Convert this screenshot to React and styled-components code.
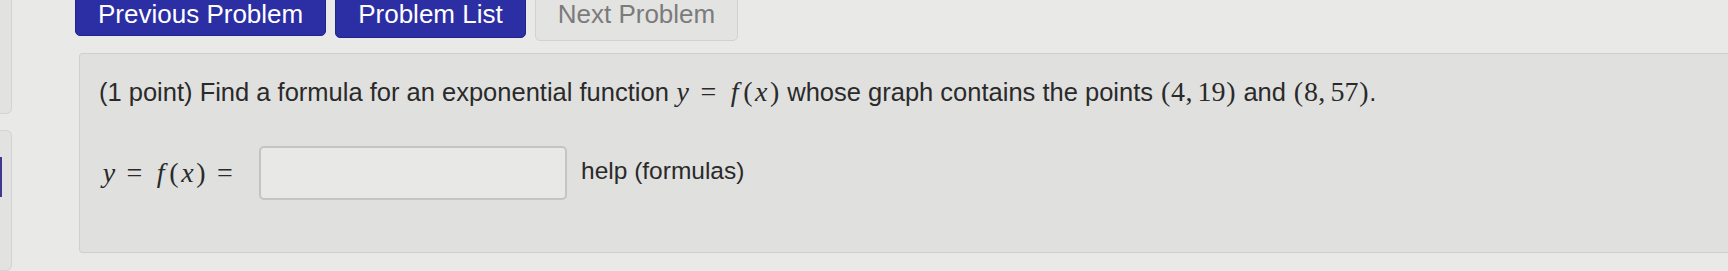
import React from "react";
import styled, { createGlobalStyle } from "styled-components";

const Global = createGlobalStyle`
  html, body { margin: 0; padding: 0; }
  body {
    background: #e9e9e8;
    font-family: "Liberation Sans", Arial, sans-serif;
    color: #2a2a2a;
    overflow: hidden;
  }
`;

const Page = styled.div`
  display: flex;
  height: 271px;
  overflow: hidden;
`;

const Sidebar = styled.div`
  width: 12px;
  display: flex;
  flex-direction: column;
  gap: 16px;
  margin-top: -6px;
`;

const SideBox = styled.div`
  height: ${(p) => p.h}px;
  background: #e2e2e1;
  border: 1px solid #d3d3d2;
  border-left: none;
  border-radius: 0 6px 6px 0;
  position: relative;
`;

const SideMark = styled.div`
  position: absolute;
  left: 0;
  top: 26px;
  width: 2px;
  height: 40px;
  background: #3b3a8f;
`;

const Main = styled.div`
  flex: 1;
  padding-left: 63px;
  display: flex;
  flex-direction: column;
`;

const Toolbar = styled.div`
  display: flex;
  gap: 9px;
  margin-top: -10px;
`;

const NavButton = styled.div`
  height: ${(p) => p.h}px;
  box-sizing: border-box;
  padding: 8px 22px 0;
  display: flex;
  align-items: flex-start;
  justify-content: center;
  border-radius: 5px;
  font-size: 26px;
  background: ${(p) => (p.disabled ? "#e3e3e2" : "#2c2ea4")};
  color: ${(p) => (p.disabled ? "#7b7b7b" : "#ffffff")};
  border: 1px solid ${(p) => (p.disabled ? "#d2d2d1" : "#23248a")};
`;

const Panel = styled.div`
  margin-top: 12px;
  margin-left: 4px;
  height: 200px;
  box-sizing: border-box;
  background: #e0e0df;
  border: 1px solid #cfcfce;
  border-right: none;
  border-radius: 4px 0 0 4px;
  padding: 21px 0 0 19px;
`;

const Line = styled.div`
  font-size: 25.5px;
  line-height: 34px;
  white-space: nowrap;
`;

const Math = styled.span`
  font-family: "Liberation Serif", "Times New Roman", serif;
  font-size: 28px;
  color: #2a2a2a;
  white-space: nowrap;
`;

const G = styled.span`
  display: inline-block;
  width: ${(p) => p.w}em;
  margin: 0 ${(p) => p.s || 0}em;
  text-align: center;
  font-style: ${(p) => (p.i ? "italic" : "normal")};
`;

const Row = styled.div`
  display: flex;
  align-items: center;
  margin-top: 37px;
  gap: 14px;
`;

const Label = styled.div`
  padding-left: 3px;
  width: 143px;
  white-space: nowrap;
`;

const Input = styled.div`
  width: 308px;
  height: 54px;
  box-sizing: border-box;
  background: #e8e8e7;
  border: 2px solid #c4c4c3;
  border-radius: 5px;
`;

const Help = styled.div`
  font-size: 24.5px;
  color: #2a2a2a;
  margin-top: -4px;
`;

const Fx = () => (
  <>
    <G i w={0.49}>y</G>
    <G w={0.778} s={0.278}>=</G>
    <G i w={0.55}>f</G>
    <G w={0.389}>(</G>
    <G i w={0.572}>x</G>
    <G w={0.389}>)</G>
  </>
);

const Pt = ({ a, b }) => (
  <>
    <G w={0.389}>(</G>
    <G w={0.5}>{a}</G>
    <G w={0.278}>,</G>
    <G w={0.167} />
    {b.split("").map((d, i) => (
      <G key={i} w={0.5}>{d}</G>
    ))}
    <G w={0.389}>)</G>
  </>
);

export default function App() {
  return (
    <>
      <Global />
      <Page>
        <Sidebar>
          <SideBox h={128} />
          <SideBox h={150}>
            <SideMark />
          </SideBox>
        </Sidebar>
        <Main>
          <Toolbar>
            <NavButton h={46}>Previous Problem</NavButton>
            <NavButton h={48}>Problem List</NavButton>
            <NavButton h={51} disabled>Next Problem</NavButton>
          </Toolbar>
          <Panel>
            <Line>
              (1 point) Find a formula for an exponential function{" "}
              <Math><Fx /></Math> whose graph contains the points{" "}
              <Math><Pt a="4" b="19" /></Math> and <Math><Pt a="8" b="57" /></Math>.
            </Line>
            <Row>
              <Label>
                <Math>
                  <Fx />
                  <G w={0.778} s={0.278}>=</G>
                </Math>
              </Label>
              <Input />
              <Help>help (formulas)</Help>
            </Row>
          </Panel>
        </Main>
      </Page>
    </>
  );
}
